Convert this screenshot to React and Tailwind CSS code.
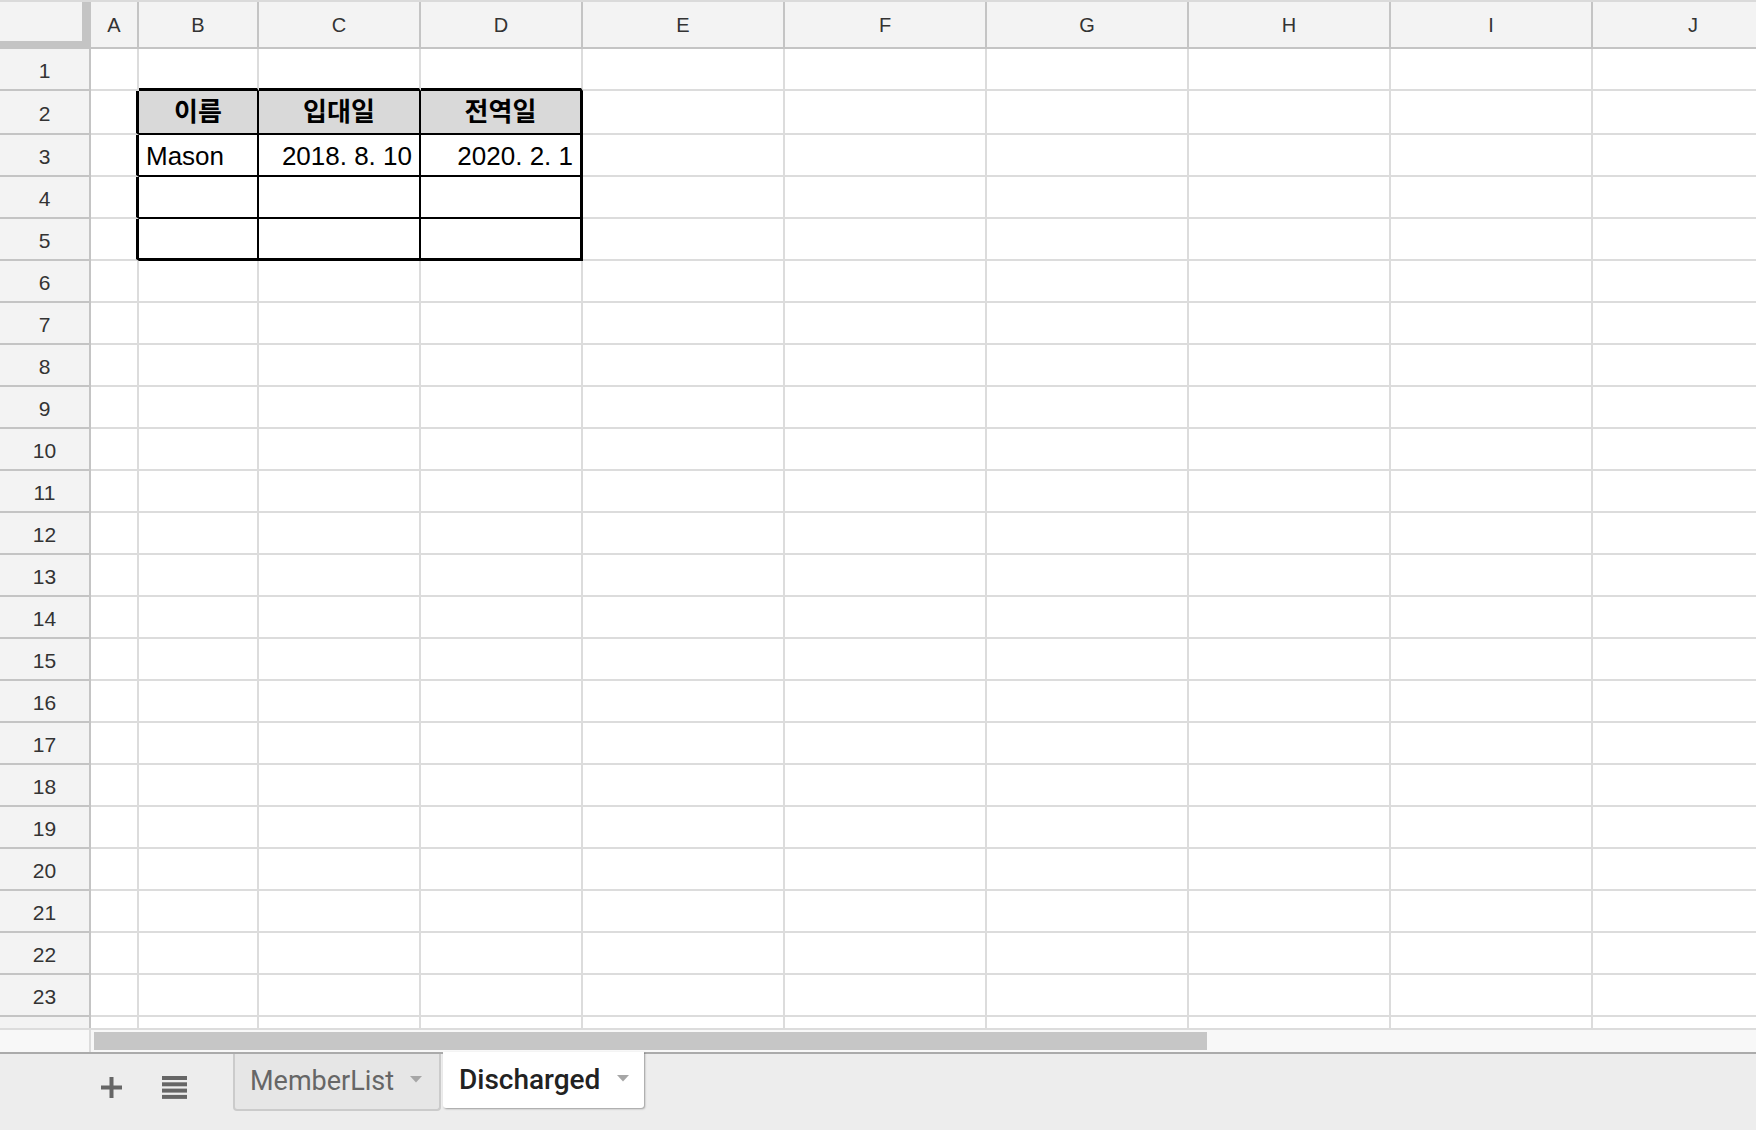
const COLS = [
  { key: "A", w: "w-[48px]" },
  { key: "B", w: "w-[120px]" },
  { key: "C", w: "w-[162px]" },
  { key: "D", w: "w-[162px]" },
  { key: "E", w: "w-[202px]" },
  { key: "F", w: "w-[202px]" },
  { key: "G", w: "w-[202px]" },
  { key: "H", w: "w-[202px]" },
  { key: "I", w: "w-[202px]" },
  { key: "J", w: "w-[202px]" },
];

const DATA = {
  2: { B: "이름", C: "입대일", D: "전역일" },
  3: { B: "Mason", C: "2018. 8. 10", D: "2020. 2. 1" },
};

const TABLE_COLS = ["B", "C", "D"];

// 23 full rows, the 24th only peeks in above the scrollbar
const rows = Array.from({ length: 24 }, (_, i) => i + 1);

function cellClasses(r, c) {
  const inTable = r >= 2 && r <= 5 && TABLE_COLS.includes(c);
  let right = "border-r-2 border-r-[#dcdcdc]";
  let bottom = "border-b-2 border-b-[#dcdcdc]";

  if (inTable) {
    right = c === "D" ? "border-r-[3px] border-r-black" : "border-r-2 border-r-black";
    bottom = r === 5 ? "border-b-[3px] border-b-black" : "border-b-2 border-b-black";
  } else if (c === "A" && r >= 2 && r <= 5) {
    right = "border-r-[3px] border-r-black";
  } else if (r === 1 && TABLE_COLS.includes(c)) {
    bottom = "border-b-[3px] border-b-black";
  }

  const bg = r === 2 && inTable ? "bg-[#d9d9d9]" : "bg-white";
  return `${right} ${bottom} ${bg}`;
}

function Cell({ r, col }) {
  const text = DATA[r]?.[col.key];
  let align = "justify-start";
  let weight = "font-normal";
  let pad = "pt-[2px]";
  if (r === 2) {
    align = "justify-center";
    weight = "font-bold";
    pad = "";
  } else if (col.key === "C" || col.key === "D") {
    align = "justify-end";
  }

  return (
    <div
      className={`shrink-0 h-full flex items-center px-[7px] overflow-hidden whitespace-nowrap text-[26px] text-black ${col.w} ${align} ${weight} ${pad} ${cellClasses(r, col.key)}`}
    >
      {text}
    </div>
  );
}

const PlusIcon = () => (
  <svg width="21" height="21" viewBox="0 0 21 21" className="shrink-0">
    <rect x="8.5" y="0" width="4" height="21" fill="#666" />
    <rect x="0" y="8.5" width="21" height="4" fill="#666" />
  </svg>
);

const SheetsMenuIcon = () => (
  <svg width="25" height="23" viewBox="0 0 25 23" className="shrink-0">
    <rect x="0" y="0" width="25" height="4" fill="#666" />
    <rect x="0" y="6.3" width="25" height="4" fill="#666" />
    <rect x="0" y="12.6" width="25" height="4" fill="#666" />
    <rect x="0" y="18.9" width="25" height="4" fill="#666" />
  </svg>
);

const Caret = ({ color }) => (
  <svg width="12" height="7" viewBox="0 0 12 7" className="shrink-0">
    <path d="M0 0 L12 0 L6 6.5 Z" fill={color} />
  </svg>
);

export default function App() {
  return (
    <div className="w-[1756px] h-[1130px] overflow-hidden bg-white flex flex-col font-['Liberation_Sans','Noto_Sans_CJK_KR',Arial,sans-serif]">
      {/* column header */}
      <div className="flex h-[49px] shrink-0 border-t-2 border-[#dadada] bg-[#f3f3f3]">
        <div className="shrink-0 w-[91px] h-full flex">
          <div className="w-[82px] h-full flex flex-col">
            <div className="flex-1 bg-[#f3f3f3]" />
            <div className="h-[8px] bg-[#c4c4c4]" />
          </div>
          <div className="w-[9px] h-full bg-[#c4c4c4]" />
        </div>
        {COLS.map((col) => (
          <div
            key={col.key}
            className={`shrink-0 h-full flex items-center justify-center border-r-2 border-b-2 border-[#c4c4c4] text-[20px] text-[#333] ${col.w}`}
          >
            {col.key}
          </div>
        ))}
      </div>

      {/* grid body */}
      <div className="h-[979px] shrink-0 overflow-hidden">
        {rows.map((r) => (
          <div key={r} className={`flex ${r === 2 ? "h-[44px]" : "h-[42px]"}`}>
            <div className="shrink-0 w-[91px] h-full flex items-center justify-center pt-[3px] bg-[#f3f3f3] border-r-2 border-b-2 border-[#c4c4c4] text-[21px] text-[#333]">
              {r < 24 ? r : null}
            </div>
            {COLS.map((col) => (
              <Cell key={col.key} r={r} col={col} />
            ))}
          </div>
        ))}
      </div>

      {/* horizontal scrollbar */}
      <div className="flex h-[26px] shrink-0 border-t-2 border-b-2 border-t-[#dcdcdc] border-b-[#ababab] bg-[#f8f8f8]">
        <div className="shrink-0 w-[91px] h-full border-r-2 border-[#dcdcdc]" />
        <div className="flex-1 h-full pl-[3px] py-[2px]">
          <div className="w-[1113px] h-full bg-[#c6c6c6]" />
        </div>
      </div>

      {/* sheet tabs */}
      <div className="flex-1 bg-[#ededed] flex items-start pl-[101px] font-['Roboto',sans-serif]">
        <div className="mt-[22px] flex items-center">
          <PlusIcon />
          <div className="ml-[40px]">
            <SheetsMenuIcon />
          </div>
        </div>
        <div className="ml-[46px] w-[208px] h-[57px] flex items-center pl-[15px] pr-[17px] bg-[#e6e6e6] border-2 border-t-0 border-[#cbcbcb] rounded-b-[4px]">
          <span className="text-[27px] text-[#666] leading-none">MemberList</span>
          <div className="ml-auto mt-[-4px]">
            <Caret color="#a6a6a6" />
          </div>
        </div>
        <div className="ml-[2px] mt-[-2px] w-[201px] h-[56px] flex items-center pl-[16px] pr-[15px] bg-white rounded-b-[3px] shadow-[1px_1px_2px_rgba(0,0,0,0.35)]">
          <span className="text-[28px] font-medium text-[#222] leading-none">Discharged</span>
          <div className="ml-auto mt-[-4px]">
            <Caret color="#a6a6a6" />
          </div>
        </div>
      </div>
    </div>
  );
}
